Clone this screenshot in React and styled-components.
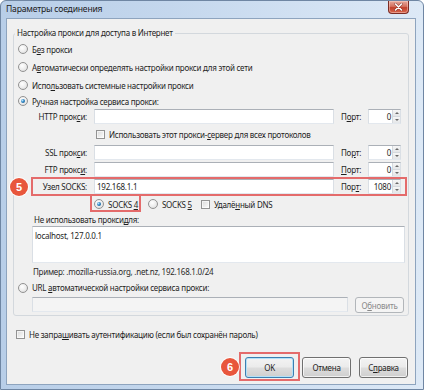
import React from 'react';
import styled, { createGlobalStyle, css } from 'styled-components';

const RED = '#e46b6b';

const Global = createGlobalStyle`
  html, body { margin: 0; padding: 0; background: #ffffff; }
  body {
    font-family: "Noto Sans", "Liberation Sans", sans-serif;
    font-size: 8px;
    letter-spacing: -0.25px;
    color: #1e1e1e;
  }
  * { box-sizing: border-box; }
  input, textarea, button { letter-spacing: inherit; }
  u { text-decoration-thickness: 1px; text-underline-offset: 1px; }
`;

const Window = styled.div`
  position: relative;
  width: 424px;
  height: 390px;
  display: flex;
  flex-direction: column;
  border: 1px solid #6f86a3;
  border-radius: 6px 6px 0 0;
  background: linear-gradient(90deg, #b8cee8 0%, #c4d7ed 40%, #d3e2f3 75%, #dde9f6 100%);
`;

const TitleBar = styled.div`
  height: 17px;
  flex: none;
  display: flex;
  align-items: flex-start;
  justify-content: space-between;
  padding-left: 5px;
`;

const TitleText = styled.div`
  font-size: 8.6px;
  letter-spacing: -0.2px;
  line-height: 17px;
  color: #1b1b1b;
`;

const CloseButton = styled.div`
  width: 21px;
  height: 13px;
  margin-right: 14px;
  border: 1px solid #7b2c24;
  border-top: none;
  border-radius: 0 0 4px 4px;
  background: linear-gradient(#e6a99c 0%, #d4715f 45%, #c2412c 55%, #d8664c 100%);
  display: flex;
  align-items: center;
  justify-content: center;
  box-shadow: inset 0 0 0 1px rgba(255, 220, 210, 0.45);
`;

const Client = styled.div`
  flex: 1;
  margin: 0 7px 4px 5px;
  border: 1px solid #8ea4be;
  background: #f0f0f0;
  display: flex;
  flex-direction: column;
`;

const Group = styled.fieldset`
  margin: 8px 6px 0 6px;
  padding: 0;
  min-width: 0;
  border: 1px solid #d3d8dd;
  border-radius: 3px;
`;

const Legend = styled.legend`
  margin-left: 1px;
  padding: 0 2px;
  line-height: 12px;
`;

const GroupBody = styled.div`
  display: flex;
  flex-direction: column;
  padding: 1px 0 2px 0;
`;

const OptionRow = styled.div`
  position: relative;
  display: flex;
  align-items: center;
  gap: 4px;
  height: ${p => p.$h}px;
  padding-left: ${p => p.$indent}px;
  white-space: nowrap;
`;

const Option = styled.div`
  position: relative;
  display: flex;
  align-items: center;
  gap: 4px;
  height: 100%;
  margin-right: ${p => p.$after || 0}px;
  ${p => p.$marked && css`
    &::after {
      content: '';
      position: absolute;
      left: -4px;
      right: -3px;
      top: -1px;
      bottom: 1px;
      border: 2px solid ${RED};
      pointer-events: none;
    }
  `}
`;

const Radio = styled.span`
  flex: none;
  position: relative;
  width: 10px;
  height: 10px;
  border-radius: 50%;
  border: 1px solid #929292;
  background: radial-gradient(circle at 40% 35%, #ffffff 0%, #ececec 55%, #d2d2d2 100%);
  ${p => p.$checked && css`
    &::after {
      content: '';
      position: absolute;
      left: 2px;
      top: 2px;
      width: 4px;
      height: 4px;
      border-radius: 50%;
      background: radial-gradient(circle at 35% 35%, #bfe8ff 0%, #2f86c4 45%, #134f7f 100%);
    }
  `}
`;

const Check = styled.span`
  flex: none;
  width: 9px;
  height: 9px;
  border: 1px solid #939393;
  background: linear-gradient(135deg, #d9d9d9 0%, #f2f2f2 70%, #ffffff 100%);
  box-shadow: inset 0 0 0 1px rgba(255, 255, 255, 0.6);
`;

const FieldRow = styled.div`
  position: relative;
  display: grid;
  grid-template-columns: 73px 240px 20px 33px;
  column-gap: 7px;
  align-items: center;
  height: 17px;
  white-space: nowrap;
  ${p => p.$marked && css`
    &::after {
      content: '';
      position: absolute;
      left: 17px;
      right: 1px;
      top: -1px;
      bottom: -1px;
      border: 2px solid ${RED};
      pointer-events: none;
    }
  `}
`;

const FieldLabel = styled.span`
  text-align: right;
`;

const PortLabel = styled.span``;

const TextInput = styled.input`
  width: ${p => (p.$w ? `${p.$w}px` : '100%')};
  height: 15px;
  margin: 0;
  padding: 0 2px;
  font: inherit;
  color: #1e1e1e;
  border: 1px solid;
  border-color: #abb0b7 #dadfe5 #e3e8ee #dadfe5;
  background: ${p => (p.$disabled ? '#f4f4f4' : '#ffffff')};
  outline: none;
`;

const PortBox = styled.div`
  display: flex;
  height: 15px;
  border: 1px solid;
  border-color: #abb0b7 #dadfe5 #e3e8ee #dadfe5;
  background: #ffffff;
`;

const PortValue = styled.span`
  flex: 1;
  text-align: right;
  padding-right: 1px;
  line-height: 13px;
`;

const Spinner = styled.div`
  width: 8px;
  display: flex;
  flex-direction: column;
  border-left: 1px solid #d5d9de;
`;

const SpinHalf = styled.div`
  flex: 1;
  display: flex;
  align-items: center;
  justify-content: center;
  background: linear-gradient(#f6f6f6, #e4e6e8);
  & + & { border-top: 1px solid #d5d9de; }
`;

const Arrow = styled.span`
  width: 0;
  height: 0;
  border-left: 2px solid transparent;
  border-right: 2px solid transparent;
  ${p => (p.$up
    ? css`border-bottom: 2px solid #6a6a6a;`
    : css`border-top: 2px solid #6a6a6a;`)}
`;

const PlainRow = styled.div`
  height: ${p => p.$h}px;
  padding-left: ${p => p.$indent}px;
  display: flex;
  align-items: center;
  white-space: nowrap;
  color: ${p => (p.$muted ? '#2a2a2a' : 'inherit')};
`;

const ExclusionBox = styled.textarea`
  display: block;
  margin: 0 0 0 18px;
  width: 373px;
  height: 37px;
  padding: 3px 2px;
  font: inherit;
  line-height: 11px;
  color: #1e1e1e;
  resize: none;
  overflow: hidden;
  border: 1px solid;
  border-color: #abb0b7 #dadfe5 #e3e8ee #dadfe5;
  background: #ffffff;
  outline: none;
`;

const UrlRow = styled.div`
  display: flex;
  align-items: flex-start;
  gap: 7px;
  height: 17px;
  padding: 1px 0 0 18px;
`;

const Button = styled.button`
  width: 49px;
  height: ${p => p.$h || 21}px;
  margin: 0;
  padding: 0;
  font: inherit;
  color: ${p => (p.disabled ? '#8a8a8a' : '#1e1e1e')};
  border: 1px solid ${p => (p.disabled ? '#b2b6ba' : p.$default ? '#3c7fb1' : '#707070')};
  border-radius: 3px;
  background: ${p => (p.disabled
    ? '#f4f4f4'
    : 'linear-gradient(#f3f3f3 0%, #ebebeb 48%, #dddddd 52%, #cfcfcf 100%)')};
  box-shadow: ${p => (p.$default
    ? 'inset 0 0 0 1px #b3e1f7'
    : p.disabled ? 'none' : 'inset 0 0 0 1px rgba(255,255,255,0.7)')};
`;

const AuthRow = styled.div`
  display: flex;
  align-items: center;
  gap: 4px;
  height: 14px;
  margin-top: 11px;
  padding-left: 9px;
  white-space: nowrap;
`;

const ButtonBar = styled.div`
  display: flex;
  justify-content: flex-end;
  gap: 8px;
  margin-top: 16px;
  padding-right: 7px;
`;

const ButtonSlot = styled.div`
  position: relative;
  display: flex;
  ${p => p.$marked && css`
    &::before {
      content: '';
      position: absolute;
      left: -6px;
      right: -6px;
      top: -5px;
      bottom: -3px;
      border: 2px solid ${RED};
      pointer-events: none;
    }
  `}
`;

const Badge = styled.span`
  position: absolute;
  left: ${p => p.$x}px;
  top: ${p => p.$y}px;
  width: 18px;
  height: 18px;
  border-radius: 50%;
  background: #e8563c;
  box-shadow: 0 0 0 1px rgba(255, 255, 255, 0.85);
  color: #ffffff;
  font-family: "Liberation Sans", "Noto Sans", sans-serif;
  font-weight: 700;
  font-size: 11px;
  letter-spacing: 0;
  display: flex;
  align-items: center;
  justify-content: center;
  z-index: 2;
`;

function Port({ value }) {
  return (
    <PortBox>
      <PortValue>{value}</PortValue>
      <Spinner>
        <SpinHalf><Arrow $up /></SpinHalf>
        <SpinHalf><Arrow /></SpinHalf>
      </Spinner>
    </PortBox>
  );
}

function ProxyField({ label, value, portLabel, port, marked, children }) {
  return (
    <FieldRow $marked={marked}>
      <FieldLabel>{label}</FieldLabel>
      <TextInput readOnly value={value} />
      <PortLabel>{portLabel}</PortLabel>
      <Port value={port} />
      {children}
    </FieldRow>
  );
}

export default function App() {
  return (
    <>
      <Global />
      <Window>
        <TitleBar>
          <TitleText>Параметры соединения</TitleText>
          <CloseButton>
            <svg width="9" height="8" viewBox="0 0 9 8">
              <path d="M1.5 1 L7.5 7 M7.5 1 L1.5 7" stroke="#5a1a12" strokeWidth="2.6" strokeLinecap="round" opacity="0.5" />
              <path d="M1.5 1 L7.5 7 M7.5 1 L1.5 7" stroke="#ffffff" strokeWidth="1.5" strokeLinecap="round" />
            </svg>
          </CloseButton>
        </TitleBar>
        <Client>
          <Group>
            <Legend>Настройка прокси для доступа в Интернет</Legend>
            <GroupBody>
              <OptionRow $h={18} $indent={4}>
                <Radio />
                <span>Б<u>е</u>з прокси</span>
              </OptionRow>
              <OptionRow $h={18} $indent={4}>
                <Radio />
                <span>А<u>в</u>томатически определять настройки прокси для этой сети</span>
              </OptionRow>
              <OptionRow $h={18} $indent={4}>
                <Radio />
                <span>Испо<u>л</u>ьзовать системные настройки прокси</span>
              </OptionRow>
              <OptionRow $h={14} $indent={4}>
                <Radio $checked />
                <span>Р<u>у</u>чная настройка сервиса прокси:</span>
              </OptionRow>

              <ProxyField label={<>HTTP прок<u>с</u>и:</>} value="" portLabel={<>П<u>о</u>рт:</>} port="0" />
              <OptionRow $h={19} $indent={82}>
                <Check />
                <span>Использовать этот прокси-<u>с</u>ервер для всех протоколов</span>
              </OptionRow>
              <ProxyField label={<>SSL прок<u>с</u>и:</>} value="" portLabel={<>По<u>р</u>т:</>} port="0" />
              <ProxyField label={<>FTP прокс<u>и</u>:</>} value="" portLabel={<><u>П</u>орт:</>} port="0" />
              <ProxyField label={<>Узел SOCKS:</>} value="192.168.1.1" portLabel={<>Пор<u>т</u>:</>} port="1080" marked>
                <Badge $x={-4} $y={0}>5</Badge>
              </ProxyField>

              <OptionRow $h={18} $indent={80}>
                <Option $marked $after={6}>
                  <Radio $checked />
                  <span>SOCKS <u>4</u></span>
                </Option>
                <Option $after={5}>
                  <Radio />
                  <span>SOCKS <u>5</u></span>
                </Option>
                <Option>
                  <Check />
                  <span>Удалё<u>н</u>ный DNS</span>
                </Option>
              </OptionRow>

              <PlainRow $h={13} $indent={20}>Не использовать прокси <u>д</u>ля:</PlainRow>
              <ExclusionBox readOnly value="localhost, 127.0.0.1" />
              <PlainRow $h={16} $indent={19} $muted>Пример: .mozilla-russia.org, .net.nz, 192.168.1.0/24</PlainRow>

              <OptionRow $h={17} $indent={4}>
                <Radio />
                <span>URL <u>а</u>втоматической настройки сервиса прокси:</span>
              </OptionRow>
              <UrlRow>
                <TextInput readOnly value="" $w={316} $disabled />
                <Button disabled $h={16}>О<u>б</u>новить</Button>
              </UrlRow>
            </GroupBody>
          </Group>

          <AuthRow>
            <Check />
            <span>Не запра<u>ш</u>ивать аутентификацию (если был сохранён пароль)</span>
          </AuthRow>

          <ButtonBar>
            <ButtonSlot $marked>
              <Badge $x={-24} $y={1}>6</Badge>
              <Button $default>OK</Button>
            </ButtonSlot>
            <ButtonSlot>
              <Button>Отмена</Button>
            </ButtonSlot>
            <ButtonSlot>
              <Button>С<u>п</u>равка</Button>
            </ButtonSlot>
          </ButtonBar>
        </Client>
      </Window>
    </>
  );
}
